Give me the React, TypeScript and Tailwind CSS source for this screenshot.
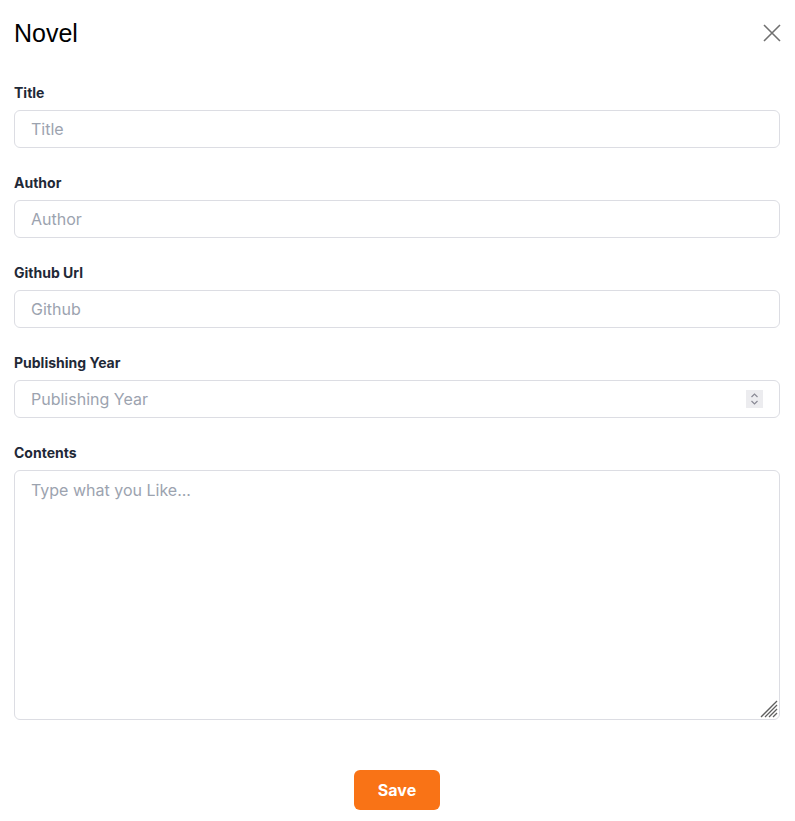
import { useState } from 'react';

const inputClass =
  'w-full h-[38px] rounded-md border border-[#dcdde3] bg-white px-4 text-base text-gray-800 placeholder:text-[#9ca3af] outline-none';

function Field({ label, children }: { label: string; children: React.ReactNode }) {
  return (
    <div className="flex flex-col">
      <label className="text-sm leading-5 font-bold text-[#1f2937] mb-[7px]">{label}</label>
      {children}
    </div>
  );
}

export default function App() {
  const [title, setTitle] = useState('');
  const [author, setAuthor] = useState('');
  const [github, setGithub] = useState('');
  const [year, setYear] = useState('');
  const [contents, setContents] = useState('');

  return (
    <div className="min-h-screen bg-white font-['Inter',sans-serif] pl-[14px] pr-[15px]">
      <div className="flex items-center justify-between pt-[17px]">
        <h2 className="font-['Liberation_Sans',Arial,sans-serif] text-[25px] leading-8 text-black">Novel</h2>
        <button className="mr-[-2px] text-[#707070]">
          <svg width="20" height="20" viewBox="0 0 20 20" fill="none" stroke="currentColor" strokeWidth="1.6">
            <path d="M2 2 L18 18 M18 2 L2 18" />
          </svg>
        </button>
      </div>

      <form className="flex flex-col gap-[25px] mt-[34px]" onSubmit={(e) => e.preventDefault()}>
        <Field label="Title">
          <input className={inputClass} placeholder="Title" value={title} onChange={(e) => setTitle(e.target.value)} />
        </Field>
        <Field label="Author">
          <input className={inputClass} placeholder="Author" value={author} onChange={(e) => setAuthor(e.target.value)} />
        </Field>
        <Field label="Github Url">
          <input className={inputClass} placeholder="Github" value={github} onChange={(e) => setGithub(e.target.value)} />
        </Field>
        <Field label="Publishing Year">
          <div className="relative">
            <input className={inputClass} placeholder="Publishing Year" value={year} onChange={(e) => setYear(e.target.value)} />
            <span className="absolute right-[17px] top-[10px] flex h-[18px] w-[17px] items-center justify-center bg-[#ececef]">
              <svg width="9" height="14" viewBox="0 0 9 14" fill="none" stroke="#8a8a95" strokeWidth="1.2">
                <path d="M1.5 5 L4.5 2 L7.5 5" />
                <path d="M1.5 9 L4.5 12 L7.5 9" />
              </svg>
            </span>
          </div>
        </Field>
        <Field label="Contents">
          <div className="relative">
            <textarea
              className="block w-full h-[250px] resize-none rounded-md border border-[#dcdde3] bg-white px-4 py-[7px] text-base text-gray-800 placeholder:text-[#9ca3af] outline-none"
              placeholder="Type what you Like..."
              value={contents}
              onChange={(e) => setContents(e.target.value)}
            />
            <svg
              className="absolute right-[2px] bottom-[2px]"
              width="18"
              height="18"
              viewBox="0 0 18 18"
              fill="none"
              stroke="#5f5f5f"
              strokeWidth="1.3"
            >
              <path d="M1 17 L17 1" />
              <path d="M5 17 L17 5" />
              <path d="M9 17 L17 9" />
              <path d="M13 17 L17 13" />
            </svg>
          </div>
        </Field>

        <div className="flex justify-center mt-[25px]">
          <button
            type="submit"
            className="h-10 w-[86px] rounded-md bg-[#f97316] text-white text-base font-bold"
          >
            Save
          </button>
        </div>
      </form>
    </div>
  );
}
